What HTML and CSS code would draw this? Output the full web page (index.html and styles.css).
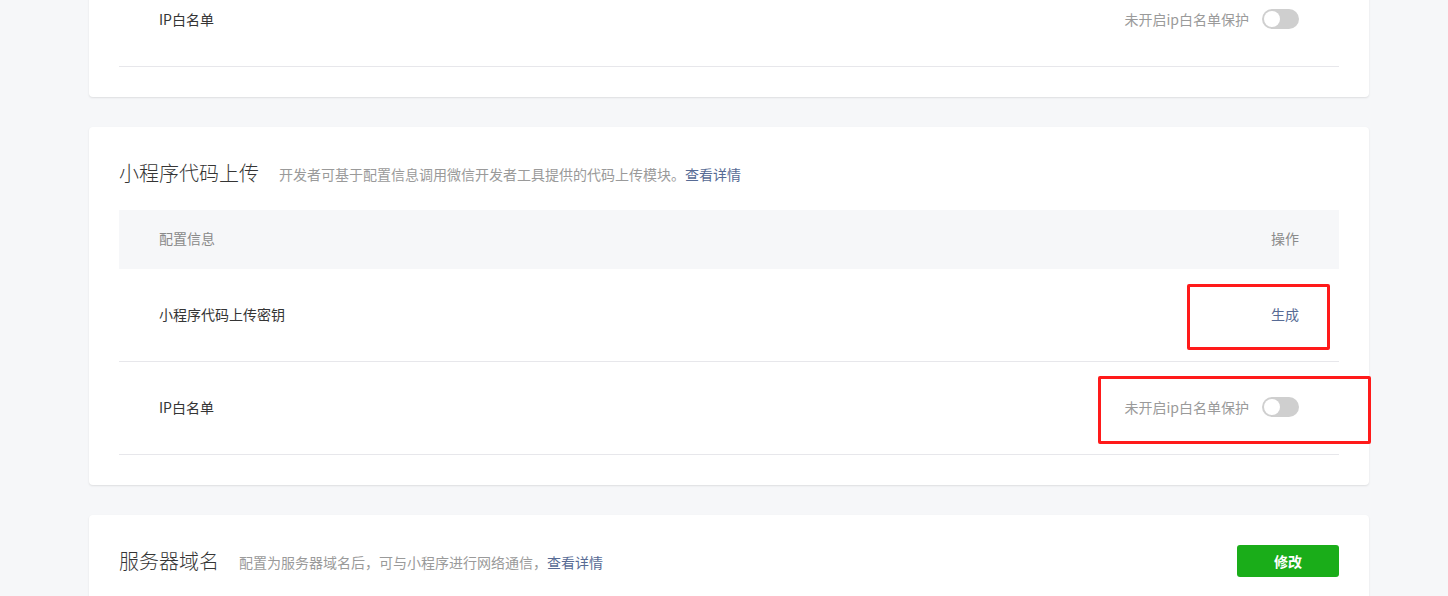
FILE: index.html
```html
<!DOCTYPE html>
<html lang="zh-CN">
<head>
<meta charset="utf-8">
<title>开发设置</title>
<link rel="stylesheet" href="styles.css">
</head>
<body>
<div class="page">
  <section class="card card-top">
    <div class="row">
      <div class="cell-name">IP白名单</div>
      <div class="cell-op">
        <span class="muted">未开启ip白名单保护</span>
        <span class="switch"><span class="knob"></span></span>
      </div>
    </div>
  </section>

  <section class="card card-upload">
    <div class="card-head">
      <h2 class="title">小程序代码上传</h2>
      <p class="desc">开发者可基于配置信息调用微信开发者工具提供的代码上传模块。<a class="link" href="#">查看详情</a></p>
    </div>
    <div class="table">
      <div class="thead">
        <div class="cell-name">配置信息</div>
        <div class="cell-op">操作</div>
      </div>
      <div class="row">
        <div class="cell-name">小程序代码上传密钥</div>
        <div class="cell-op"><a class="link" href="#">生成</a></div>
      </div>
      <div class="row">
        <div class="cell-name">IP白名单</div>
        <div class="cell-op">
          <span class="muted">未开启ip白名单保护</span>
          <span class="switch"><span class="knob"></span></span>
        </div>
      </div>
    </div>
    <div class="mark mark-gen"></div>
    <div class="mark mark-ip"></div>
  </section>

  <section class="card card-domain">
    <div class="card-head">
      <h2 class="title">服务器域名</h2>
      <p class="desc">配置为服务器域名后，可与小程序进行网络通信，<a class="link" href="#">查看详情</a></p>
      <a class="btn" href="#">修改</a>
    </div>
  </section>
</div>
</body>
</html>
```

FILE: styles.css
```css
html, body {
  margin: 0;
  padding: 0;
  background: #f6f7f9;
  font-family: "Noto Sans CJK SC", "Noto Sans", sans-serif;
  color: #353535;
  overflow: hidden;
}

.page {
  width: 1280px;
  margin-left: 89px;
  margin-top: -27px;
  display: flex;
  flex-direction: column;
  gap: 30px;
}

.card {
  position: relative;
  background: #fff;
  border-radius: 4px;
  box-shadow: 0 1px 2px rgba(0, 0, 0, 0.1);
  padding: 0 30px 30px;
}

.card-head {
  display: flex;
  align-items: center;
  padding-top: 32px;
  height: 28px;
}

.title {
  margin: 0;
  font-size: 20px;
  line-height: 28px;
  font-weight: 300;
  color: #353535;
}

.desc {
  margin: 0 0 0 20px;
  font-size: 14px;
  line-height: 20px;
  color: #9a9a9a;
  flex: 1;
  padding-top: 2px;
}

.link {
  color: #576b95;
  text-decoration: none;
}

.table {
  margin-top: 23px;
}

.thead {
  display: flex;
  align-items: center;
  justify-content: space-between;
  height: 56px;
  padding: 0 40px 3px;
  background: #f6f7f9;
  font-size: 14px;
  color: #8a8a8a;
}

.row {
  display: flex;
  align-items: center;
  justify-content: space-between;
  height: 90px;
  padding: 0 40px 2px;
  border-bottom: 1px solid #e7e7eb;
  font-size: 14px;
  color: #353535;
}

.card-top .row {
  height: 91px;
}

.cell-op {
  display: flex;
  align-items: center;
  gap: 13px;
}

.muted {
  color: #9a9a9a;
}

.switch {
  position: relative;
  display: inline-block;
  width: 37px;
  height: 20px;
  border-radius: 10px;
  background: #cfcfcf;
}

.knob {
  position: absolute;
  left: 2px;
  top: 2px;
  width: 16px;
  height: 16px;
  border-radius: 50%;
  background: #fff;
}

.mark {
  position: absolute;
  border: 3px solid #ff1a1a;
  border-radius: 2px;
  box-sizing: border-box;
}

.mark-gen {
  left: 1098px;
  top: 157px;
  width: 143px;
  height: 66px;
}

.mark-ip {
  left: 1009px;
  top: 249px;
  width: 273px;
  height: 68px;
}

.btn {
  display: inline-flex;
  align-items: center;
  justify-content: center;
  width: 102px;
  height: 32px;
  border-radius: 3px;
  background: #1aad19;
  color: #fff;
  font-size: 14px;
  font-weight: bold;
  text-decoration: none;
}

.card-domain {
  height: 120px;
}
```
